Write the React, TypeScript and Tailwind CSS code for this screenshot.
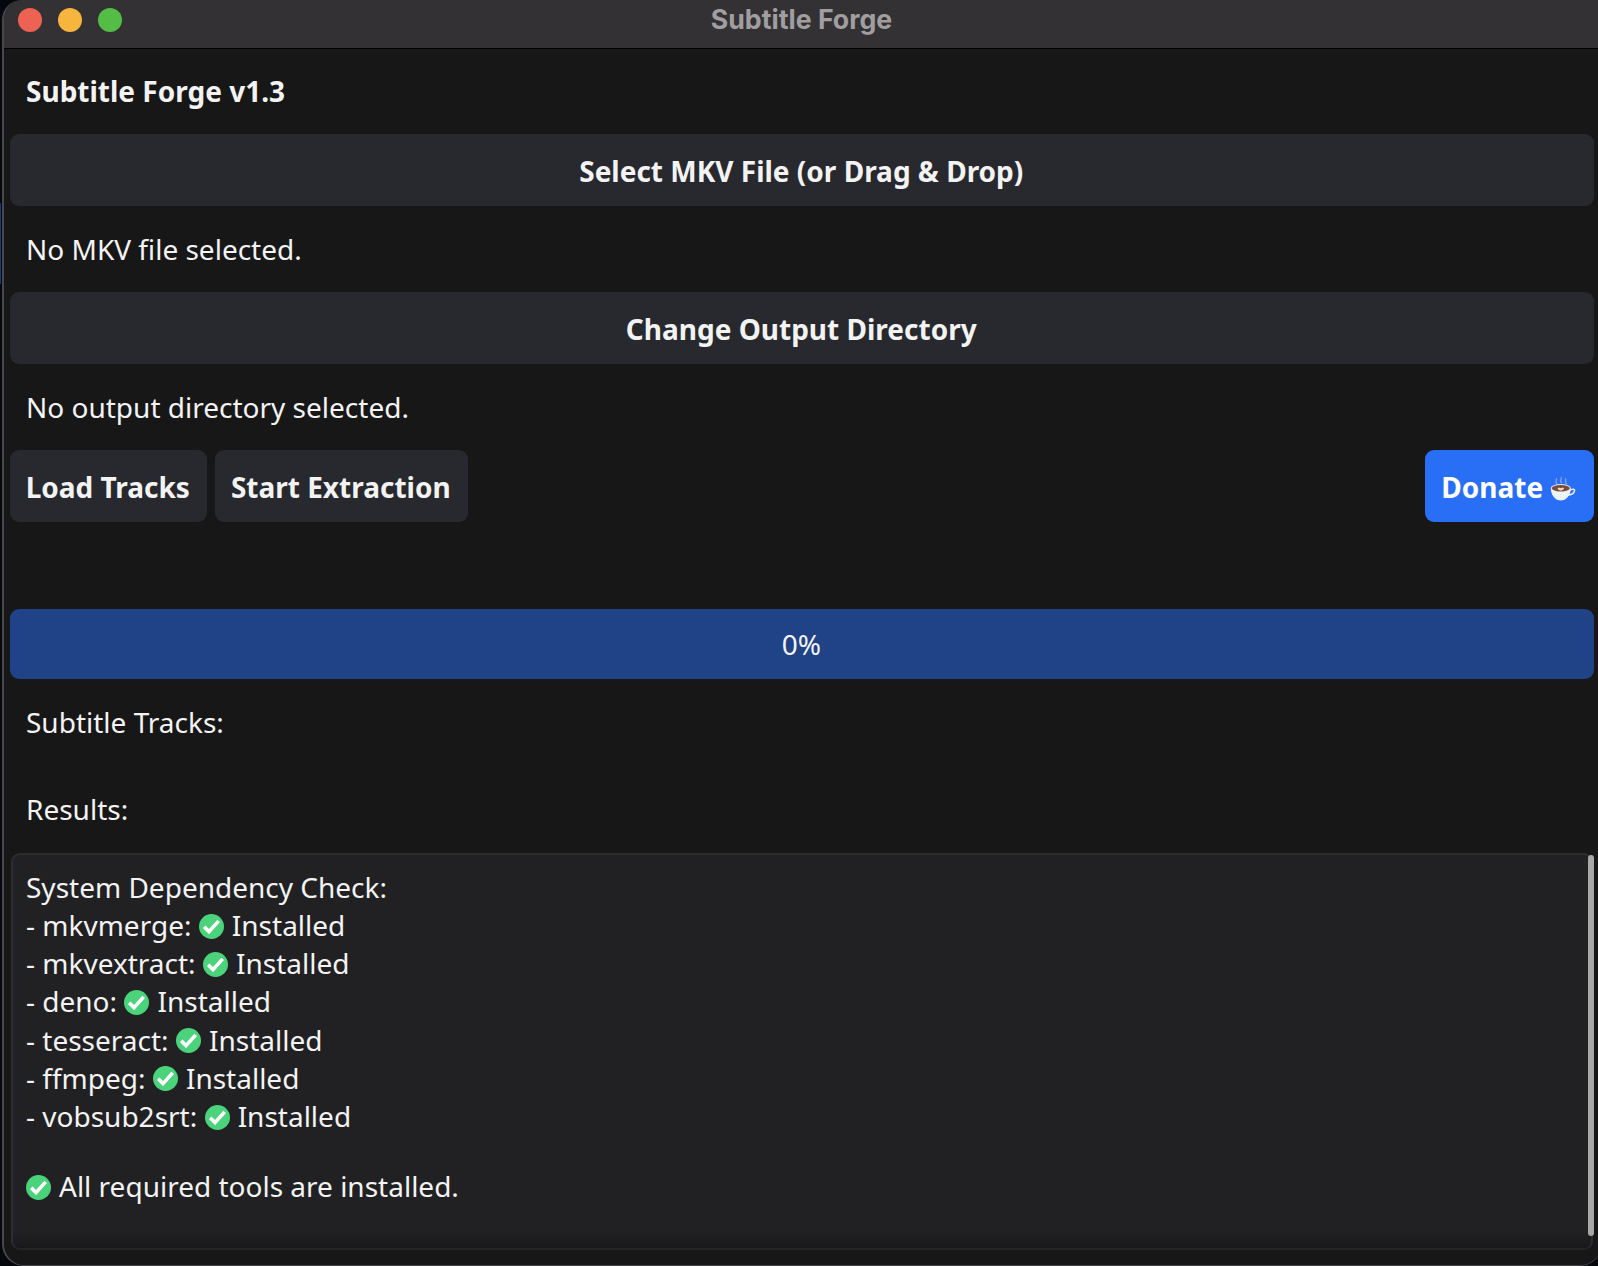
import React from "react";

const tools = ["mkvmerge", "mkvextract", "deno", "tesseract", "ffmpeg", "vobsub2srt"];

function Check({ className = "mr-[8px] ml-[7.400px]" }: { className?: string }) {
  return (
    <svg viewBox="0 0 24 24" className={`mt-[2px] h-[25px] w-[25px] shrink-0 ${className}`}>
      <circle cx="12" cy="12" r="12" fill="#4bd37b" />
      <path d="M5 12.200l4.600 4.700 9.300-10.300" fill="none" stroke="#fff" strokeWidth="3.500" />
    </svg>
  );
}

function Coffee() {
  return (
    <svg viewBox="0 0 26 26" className="mt-[3px] ml-[7px] h-[26px] w-[26px] shrink-0">
      <path d="M7 8C4 5 8 5 6 2.500M12 7C8 4 13 4 11 1M17 8C13 5 18 4 15 2.500" fill="none" stroke="#9fb6e6" strokeWidth="1.300" opacity=".75" />
      <path d="M19.500 14.500c3-2.200 5.500-1.500 5 .5-.5 2.400-3.500 3.800-7 4" fill="none" stroke="#e9eef2" strokeWidth="1.500" />
      <path d="M.8 12c0 5 2 8.500 5 11 1.500 1.900 8.500 1.900 10 0 3-2.500 5-6 5-11z" fill="#eef3f5" />
      <ellipse cx="10.800" cy="12" rx="10" ry="4" fill="#e3e6e8" />
      <ellipse cx="10.800" cy="12.200" rx="9" ry="3.200" fill="#764c3b" />
      <path d="M10.800 14.800c-5-2-3.500-4 0-2.600 3.500-1.400 5 .6 0 2.600z" fill="#f2d9b8" />
    </svg>
  );
}

function Label({ children, className = "" }: { children: React.ReactNode; className?: string }) {
  return <div className={`flex items-center px-[16px] ${className}`}>{children}</div>;
}

function Button({ children, className = "bg-[#28292e]" }: { children: React.ReactNode; className?: string }) {
  return (
    <button className={`flex h-[72px] items-center justify-center rounded-[9px] pt-[2px] pr-[1.500px] font-bold ${className}`}>
      {children}
    </button>
  );
}

export default function App() {
  return (
    <div className="flex h-[1266px] w-[1598px] overflow-hidden bg-[#05090d] font-['Noto_Sans',sans-serif] text-[28px] leading-[38px] text-[#f3f3f3]">
      <div className="w-[2px] shrink-0 pt-[203px]">
        <div className="h-[81px] w-px bg-[#1b3a7c]" />
      </div>
      <div className="flex h-[1266px] w-[1600px] shrink-0 flex-col overflow-hidden rounded-tl-[20px] rounded-b-[22px] border-b border-l-2 border-[#48484a] bg-[#171717]">
        <header className="flex h-[49px] shrink-0 items-center border-b border-black bg-[#333133] pb-[8px] pl-[14px]">
          <div className="flex gap-[16px]">
            <span className="h-[24px] w-[24px] rounded-full bg-[#ed6253]" />
            <span className="h-[24px] w-[24px] rounded-full bg-[#f6b53d]" />
            <span className="h-[24px] w-[24px] rounded-full bg-[#54bd45]" />
          </div>
          <div className="grow pr-[121px] pb-[2px] text-center font-['Inter',sans-serif] text-[26.700px] leading-[32px] font-bold text-[#a09ea0]">
            Subtitle Forge
          </div>
        </header>
        <main className="flex w-[1590px] grow flex-col pl-[6px]">
          <Label className="h-[85px] pb-[2px] font-bold">Subtitle Forge v1.3</Label>
          <Button>Select MKV File (or Drag &amp; Drop)</Button>
          <Label className="h-[86px]">No MKV file selected.</Label>
          <Button>Change Output Directory</Button>
          <Label className="h-[86px]">No output directory selected.</Label>
          <div className="flex gap-[8px]">
            <Button className="w-[197px] bg-[#28292e]">Load Tracks</Button>
            <Button className="w-[253px] bg-[#28292e]">Start Extraction</Button>
            <Button className="ml-auto w-[169px] bg-[#296ff5] text-white">
              Donate
              <Coffee />
            </Button>
          </div>
          <div className="mt-[87px] flex h-[70px] items-center justify-center rounded-[9px] bg-[#204287] pr-px">0%</div>
          <Label className="h-[87px] pb-[2px]">Subtitle Tracks:</Label>
          <Label className="h-[87px] pb-[2px]">Results:</Label>
          <section className="relative ml-[1px] h-[397px] w-[1582px] rounded-[9px] border-2 border-[#2d2d2f] border-b-[#242426] bg-linear-to-b from-[#212123] from-96% to-[#18181a] pt-[13px] pl-[13px]">
            <div>System Dependency Check:</div>
            {tools.map((tool) => (
              <div key={tool} className="flex h-[38.200px] items-center">
                - {tool}:<Check />
                Installed
              </div>
            ))}
            <div className="mt-[32px] flex items-center">
              <Check className="mr-[8px]" />
              All required tools are installed.
            </div>
            <div className="absolute top-0 -right-[3px] h-[381px] w-[6px] rounded-full bg-[#a8a8a8]" />
          </section>
        </main>
      </div>
    </div>
  );
}
